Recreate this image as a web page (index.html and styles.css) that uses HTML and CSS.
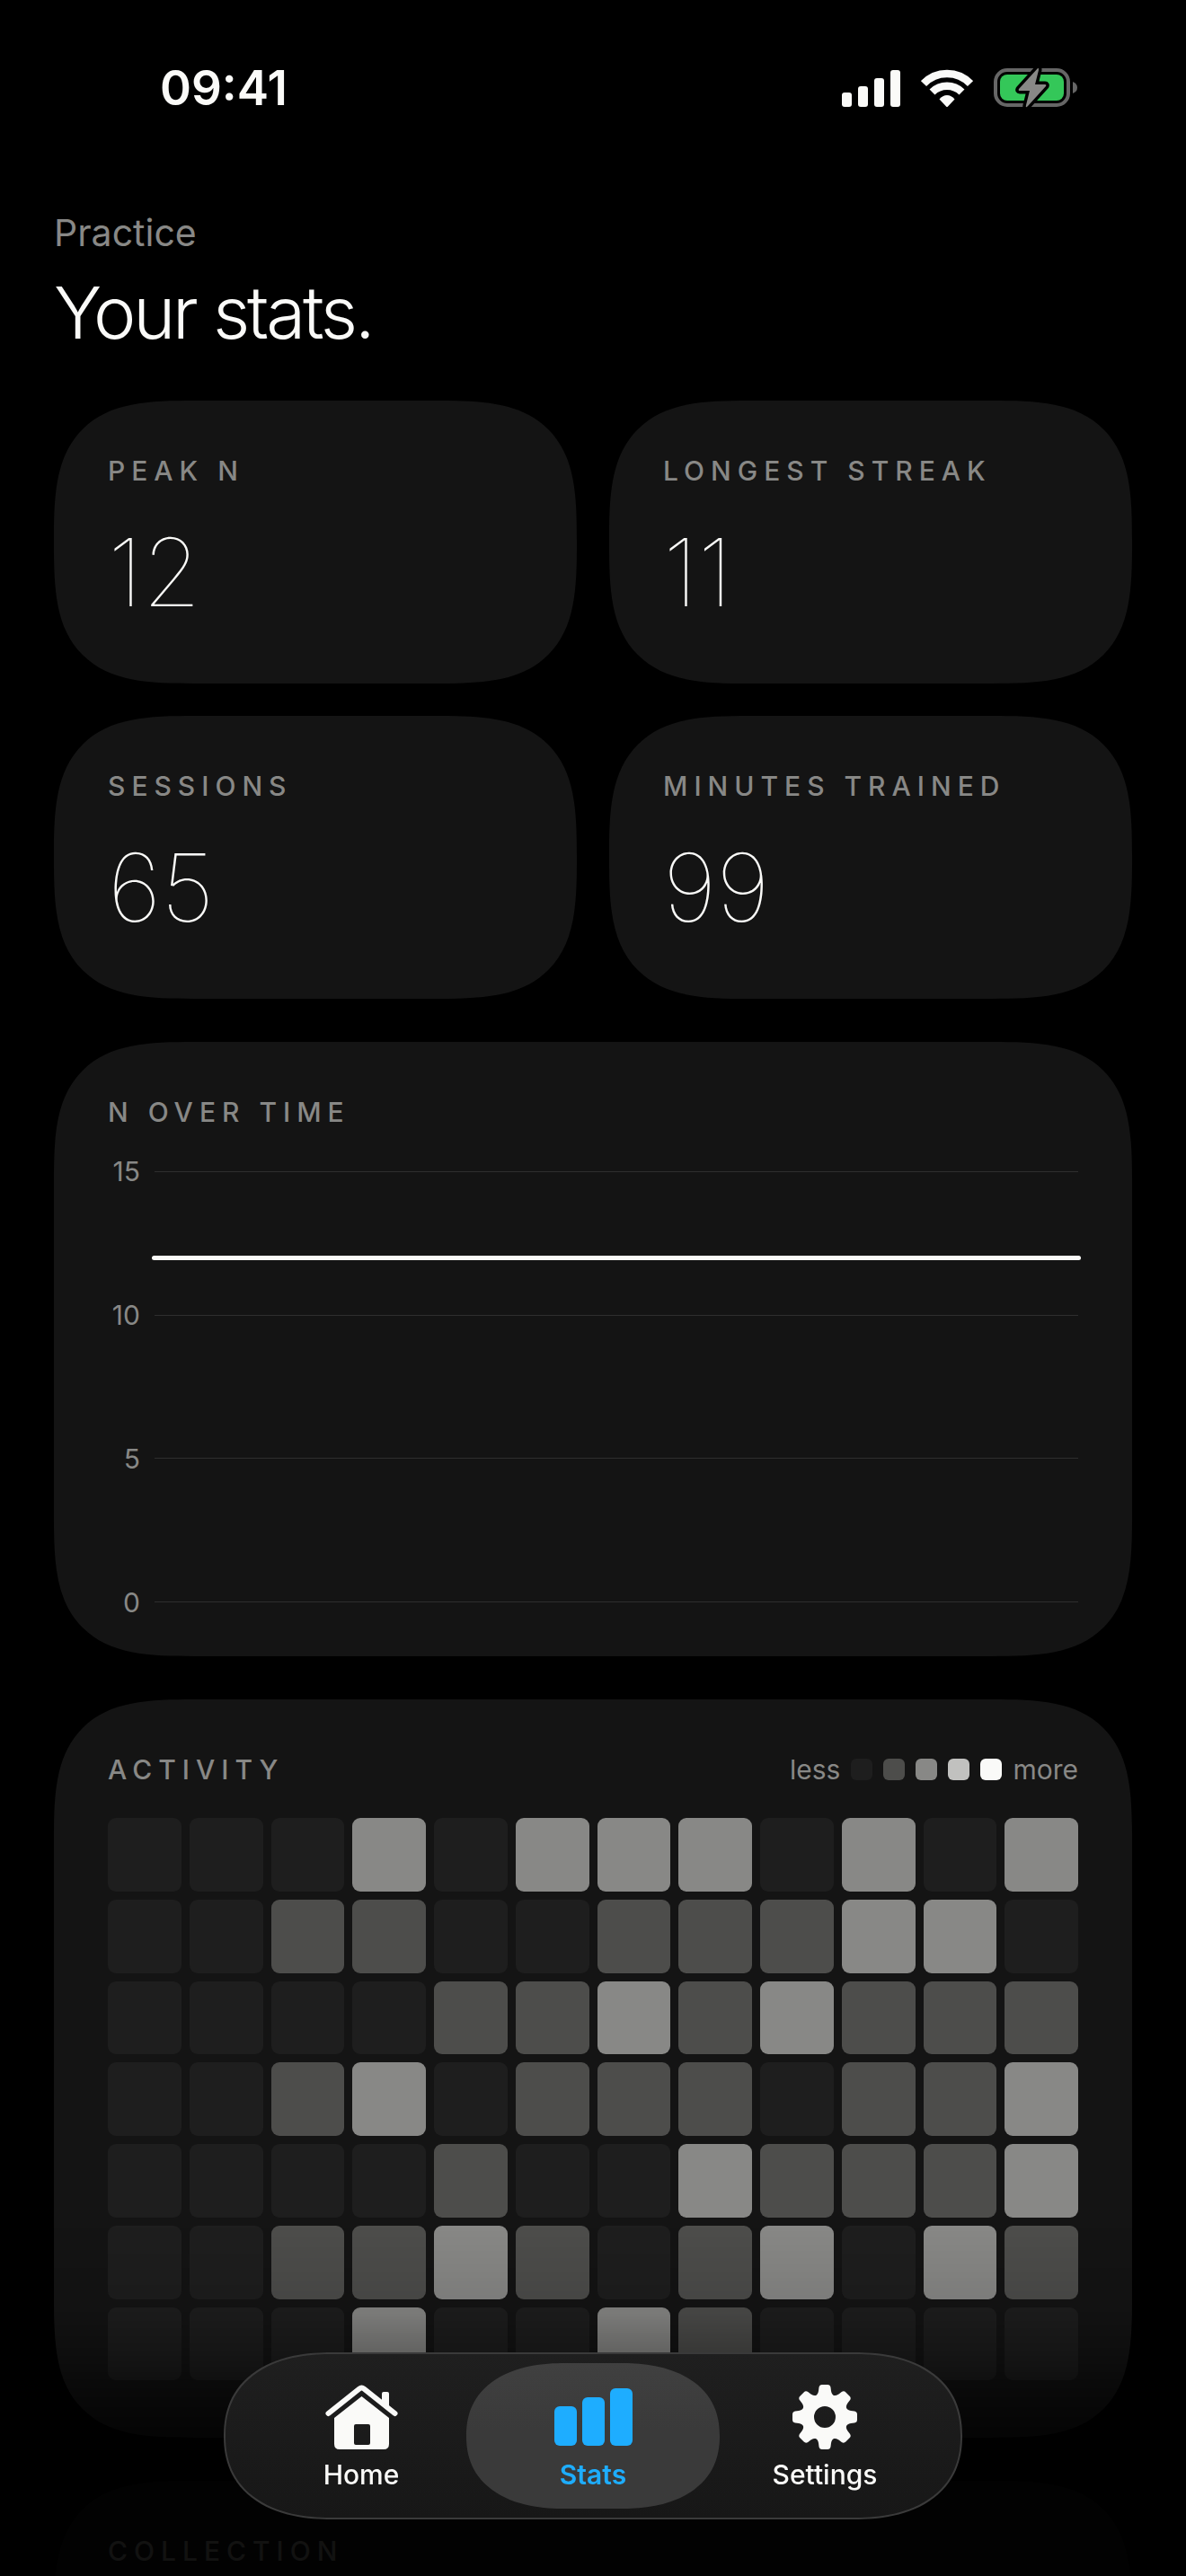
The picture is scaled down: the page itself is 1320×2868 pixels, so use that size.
FILE: index.html
```html
<!DOCTYPE html>
<html lang="en">
<head>
    <meta charset="UTF-8">
    <meta name="viewport" content="width=device-width, initial-scale=1.0">
    <title>Your stats</title>
    <link rel="stylesheet" href="styles.css">
</head>
<body>
    <header class="status-bar">
        <time class="clock">09:41</time>
        <div class="status-icons">
            <svg width="65" height="42" viewBox="0 0 65 42" fill="#fafaf8" aria-hidden="true">
                <rect x="0" y="26" width="11" height="16" rx="3"/>
                <rect x="18" y="19" width="11" height="23" rx="3"/>
                <rect x="36" y="10" width="11" height="32" rx="3"/>
                <rect x="54" y="1" width="11" height="41" rx="3"/>
            </svg>
            <svg width="58" height="42" viewBox="0 0 58 42" aria-hidden="true">
                <g fill="none" stroke="#fafaf8" stroke-width="8.5">
                    <path d="M3 16A36 36 0 0 1 55 16"/>
                    <path d="M12.5 25.5A23.5 23.5 0 0 1 45.5 25.5"/>
                </g>
                <path fill="#fafaf8" d="M20.5 33.5Q24 29 29 29T37.500 33.500L30 41.500Q29 42.500 28 41.500Z"/>
            </svg>
            <svg width="94" height="46" viewBox="0 -1 94 46" aria-hidden="true">
                <rect x="2" y="2" width="81" height="39" rx="13" fill="none" stroke="#666" stroke-width="4"/>
                <rect x="7" y="7" width="71" height="29" rx="8" fill="#34c759"/>
                <path d="M88 15Q93 17 93 21.500T88 28Z" fill="#666"/>
                <path d="M49 0L28 23Q27 25 29 25H40L36 41Q35 45 38 42L58 20Q59 18 57 18H46L50 2Q50 -1 49 0Z" fill="#888886" stroke="#000" stroke-width="7" paint-order="stroke" stroke-linejoin="round"/>
            </svg>
        </div>
    </header>

    <main>
        <p class="eyebrow">Practice</p>
        <h1>Your stats.</h1>

        <section class="tiles">
            <div class="card">
                <h2>Peak N</h2>
                <p class="value">12</p>
            </div>
            <div class="card">
                <h2>Longest streak</h2>
                <p class="value">11</p>
            </div>
            <div class="card">
                <h2>Sessions</h2>
                <p class="value">65</p>
            </div>
            <div class="card">
                <h2>Minutes trained</h2>
                <p class="value">99</p>
            </div>
        </section>

        <section class="card">
            <h2>N over time</h2>
            <div class="chart">
                <div class="axis">
                    <span>15</span>
                    <span>10</span>
                    <span>5</span>
                    <span>0</span>
                </div>
                <div class="plot">
                    <i></i><i></i><i></i><i></i>
                    <div class="series" style="bottom: 80%"></div>
                </div>
            </div>
        </section>

        <section class="card activity">
            <div class="card-head">
                <h2>Activity</h2>
                <div class="legend">
                    <span>less</span>
                    <i class="l0"></i>
                    <i class="l1"></i>
                    <i class="l2"></i>
                    <i class="l3"></i>
                    <i class="l4"></i>
                    <span>more</span>
                </div>
            </div>
            <div class="heatmap" id="heatmap"></div>
        </section>

        <section class="card">
            <h2>Collection</h2>
            <p class="value">&nbsp;</p>
        </section>
    </main>

    <div class="fade"></div>

    <nav class="tabs">
        <a href="#home">
            <svg width="81" height="72" viewBox="0 0 81 72" aria-hidden="true">
                <path d="M63 23V10Q63 8 65 8H69Q71 8 71 10V30Z" fill="currentColor"/>
                <path d="M3.500 32L38 4.500Q40.500 2.500 43 4.500L77.500 32" fill="none" stroke="currentColor" stroke-width="6" stroke-linecap="round"/>
                <path d="M40.500 13L71 37V66Q71 72 65 72H16Q10 72 10 66V37ZM34 44Q32 44 32 46V65Q32 67 34 67H48Q50 67 50 65V46Q50 44 48 44Z" fill="currentColor" fill-rule="evenodd"/>
            </svg>
            <span>Home</span>
        </a>
        <a href="#stats" class="active" aria-current="page">
            <svg width="87" height="72" viewBox="0 0 87 72" fill="currentColor" aria-hidden="true">
                <rect x="0" y="24" width="25" height="44" rx="6"/>
                <rect x="31" y="14" width="25" height="54" rx="6"/>
                <rect x="62" y="4" width="25" height="64" rx="6"/>
            </svg>
            <span>Stats</span>
        </a>
        <a href="#settings">
            <svg width="72" height="72" viewBox="0 0 72 72" aria-hidden="true">
                <defs>
                    <path id="tooth" d="M24 14Q28.500 11 29 7L29.500 3Q30 0 33 0H39Q42 0 42.500 3L43 7Q43.500 11 48 14Z"/>
                </defs>
                <circle cx="36" cy="36" r="19" fill="none" stroke="currentColor" stroke-width="14"/>
                <g fill="currentColor">
                    <use href="#tooth"/>
                    <use href="#tooth" transform="rotate(45 36 36)"/>
                    <use href="#tooth" transform="rotate(90 36 36)"/>
                    <use href="#tooth" transform="rotate(135 36 36)"/>
                    <use href="#tooth" transform="rotate(180 36 36)"/>
                    <use href="#tooth" transform="rotate(225 36 36)"/>
                    <use href="#tooth" transform="rotate(270 36 36)"/>
                    <use href="#tooth" transform="rotate(315 36 36)"/>
                </g>
            </svg>
            <span>Settings</span>
        </a>
    </nav>

    <script src="script.js"></script>
</body>
</html>
```
FILE: styles.css
```css
* {
    box-sizing: border-box;
}
body {
    margin: 0;
    height: 100vh;
    overflow: hidden;
    background: #000;
    color: #fafaf8;
    font-family: Inter, "Liberation Sans", sans-serif;
}
h1, h2, p {
    margin: 0;
}

/* status bar */
.status-bar {
    display: flex;
    justify-content: space-between;
    align-items: center;
    padding: 67px 120px 63px 178px;
}
.clock {
    font-size: 53px;
    font-weight: 600;
    line-height: 62px;
}
.status-icons {
    display: flex;
    align-items: center;
    gap: 23px;
}

/* content */
main {
    padding: 42px 60px 0;
}
.eyebrow {
    color: #888886;
    font-size: 41px;
    line-height: 50px;
}
h1 {
    margin: 14px 0 48px;
    font-size: 80px;
    font-weight: 300;
    line-height: 100px;
    letter-spacing: -0.04em;
}
.tiles {
    display: grid;
    grid-template-columns: 1fr 1fr;
    gap: 36px;
    margin-bottom: 48px;
}
.card {
    padding: 60px;
    background: #141414;
    border-radius: 112px;
}
@supports (corner-shape: squircle) {
    .card {
        border-radius: 156px;
        corner-shape: superellipse(1.6);
    }
}
section.card {
    margin-bottom: 48px;
}
h2 {
    color: #888886;
    font-size: 30px;
    font-weight: 500;
    line-height: 36px;
    letter-spacing: 7px;
    text-transform: uppercase;
}
.value {
    margin-top: 30px;
    font-size: 105px;
    font-weight: 100;
    line-height: 129px;
}

/* n over time */
.chart {
    display: flex;
    gap: 16px;
    height: 480px;
    margin-top: 48px;
}
.axis {
    display: flex;
    flex-direction: column;
    justify-content: space-between;
    width: 36px;
    margin: -18px 0;
    color: #888886;
    font-size: 30px;
    line-height: 36px;
    text-align: right;
}
.plot {
    position: relative;
    flex: 1;
    display: flex;
    flex-direction: column;
    justify-content: space-between;
}
.plot i {
    height: 1px;
    background: #2e2e2e;
}
.series {
    position: absolute;
    left: -3px;
    right: -3px;
    height: 5px;
    margin-bottom: -3px;
    border-radius: 3px;
    background: #fafaf8;
}

/* activity */
.activity {
    padding-bottom: 64px;
}
.card-head, .legend {
    display: flex;
    align-items: center;
}
.card-head {
    justify-content: space-between;
    margin-bottom: 36px;
}
.legend {
    gap: 12px;
    color: #888886;
    font-size: 30px;
    line-height: 36px;
}
.legend i {
    width: 24px;
    height: 24px;
    border-radius: 6px;
}
.heatmap {
    display: grid;
    grid-template-columns: repeat(12, 1fr);
    gap: 9px;
}
.heatmap i {
    aspect-ratio: 1;
    border-radius: 9px;
}
.l0 { background: #1e1e1e; }
.l1 { background: #4d4d4b; }
.l2 { background: #888886; }
.l3 { background: #c1c1bf; }
.l4 { background: #fafaf8; }

/* content darkens behind the tab bar */
.fade {
    position: fixed;
    left: 0;
    right: 0;
    bottom: 0;
    height: 390px;
    background: linear-gradient(
        rgba(0, 0, 0, 0),
        rgba(0, 0, 0, 0.1) 25%,
        rgba(0, 0, 0, 0.27) 36%,
        rgba(0, 0, 0, 0.48) 45%,
        rgba(0, 0, 0, 0.75) 60%,
        rgba(0, 0, 0, 0.87) 75%,
        rgba(0, 0, 0, 0.87)
    );
}

/* tab bar */
.tabs {
    position: fixed;
    left: 50%;
    bottom: 63px;
    transform: translateX(-50%);
    display: flex;
    padding: 10px;
    border: 2px solid #3a3a3a;
    border-radius: 104px / 93px;
    background: linear-gradient(#1f1f1f, #171717);
}
.tabs a {
    display: flex;
    flex-direction: column;
    align-items: center;
    gap: 10px;
    width: 282px;
    padding: 24px 0 20px;
    border-radius: 96px / 81px;
    color: #fafaf8;
    font-size: 30px;
    font-weight: 500;
    line-height: 36px;
    text-decoration: none;
}
.tabs a + a {
    margin-left: -24px;
}
.tabs .active {
    background: linear-gradient(#404040, #3a3a3a 45%);
    color: #1eadff;
    font-weight: 600;
}
@supports (corner-shape: squircle) {
    .tabs {
        border-radius: 120px / 93px;
        corner-shape: superellipse(1.2);
    }
    .tabs a {
        border-radius: 110px / 81px;
        corner-shape: superellipse(1.2);
    }
}
```
FILE: script.js
```javascript
// one string per row, one digit per cell (0 = none, 4 = most)
const activity = [
    '000202220202',
    '001100111220',
    '000011212111',
    '001201110112',
    '000010021112',
    '001121012021',
    '000200210000'
];

document.getElementById('heatmap').innerHTML = activity
    .map(row => [...row].map(level => `<i class="l${level}"></i>`).join(''))
    .join('');
```
